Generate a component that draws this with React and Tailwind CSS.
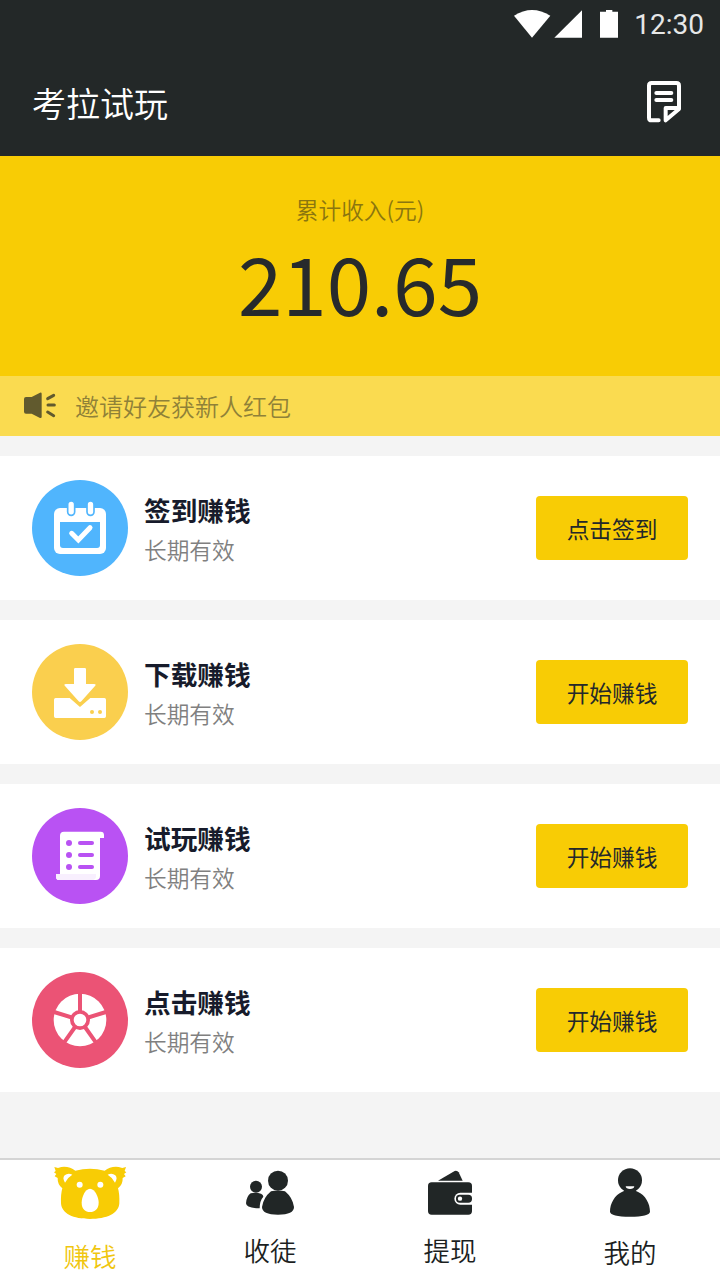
const CalendarIcon = () => (
  <svg className="size-24 shrink-0" viewBox="36 30 288 288">
    <circle cx="180" cy="174" r="144" fill="#50b5fd" />
    <rect x="102" y="114" width="156" height="138" rx="18" fill="#fff" />
    <path d="M120 156H240V225q0 9-9 9H129q-9 0-9-9Z" fill="#50b5fd" />
    <rect x="143" y="93" width="21" height="43" rx="10.5" fill="#fff" stroke="#50b5fd" strokeWidth="5" />
    <rect x="201" y="93" width="21" height="43" rx="10.5" fill="#fff" stroke="#50b5fd" strokeWidth="5" />
    <path d="M155 190L175 210L210 173" fill="none" stroke="#fff" strokeWidth="15" strokeLinecap="round" />
  </svg>
);

const DownloadIcon = () => (
  <svg className="size-24 shrink-0" viewBox="36 30 288 288">
    <circle cx="180" cy="174" r="144" fill="#facf4e" />
    <path d="M107 192H149L180 219L211 192H253q5 0 5 5V247q0 5-5 5H107q-5 0-5-5V197q0-5 5-5Z" fill="#fff" />
    <path
      d="M166 102H194q4 0 4 4V150H222q8 0 3 6L184 202q-4 4-8 0L135 156q-5-6 3-6H162V106q0-4 4-4Z"
      fill="#fff"
      stroke="#facf4e"
      strokeWidth="12"
      paintOrder="stroke"
    />
    <circle cx="216" cy="234" r="6" fill="#facf4e" />
    <circle cx="240" cy="234" r="6" fill="#facf4e" />
  </svg>
);

const ScrollIcon = () => (
  <svg className="size-24 shrink-0" viewBox="36 30 288 288">
    <circle cx="180" cy="174" r="144" fill="#b952f3" />
    <path d="M132 101H242q10 0 10 10V120H240V234q0 12-12 12H118q-10 0-10-10V228H120V113q0-12 12-12Z" fill="#fff" />
    <path d="M108 228H228V234q0 12-12 12H118q-10 0-10-10Z" fill="#f8effe" />
    <g fill="#b952f3">
      <circle cx="147" cy="135" r="9" />
      <circle cx="147" cy="171" r="9" />
      <circle cx="147" cy="207" r="9" />
      <rect x="174" y="129" width="48" height="12" rx="6" />
      <rect x="174" y="165" width="48" height="12" rx="6" />
      <rect x="174" y="201" width="48" height="12" rx="6" />
    </g>
  </svg>
);

const WheelIcon = () => (
  <svg className="size-24 shrink-0" viewBox="36 30 288 288">
    <circle cx="180" cy="174" r="144" fill="#eb5375" />
    <circle cx="180" cy="174" r="79" fill="#fff" />
    <path
      d="M180 174V92M180 174L102 150M180 174L258 150M180 174L132 242M180 174L228 242"
      stroke="#eb5375"
      strokeWidth="12"
    />
    <circle cx="180" cy="174" r="24.500" fill="#fff" stroke="#eb5375" strokeWidth="11" />
  </svg>
);

const KoalaIcon = () => (
  <svg className="h-[57px] w-[76px]" viewBox="66 42 228 171">
    <path
      d="M73 51L84 54L94 51Q118 48 136 62Q180 51 224 62Q242 48 266 51L277 54L288 51L284 63L289 67L282 72L287 79L278 84Q279 103 264 115Q269 132 268 160C266 191 230 207 180 207S95 191 93 160Q92 132 97 115Q82 103 83 84L74 79L79 72L72 67L77 63Z"
      fill="#f8cc05"
    />
    <path d="M105 98Q96 84 104 76Q114 67 127 74Q113 82 105 98ZM255 98Q264 84 256 76Q246 67 233 74Q247 82 255 98Z" fill="#fff" />
    <circle cx="149" cy="104" r="9" fill="#fff" />
    <circle cx="211" cy="104" r="9" fill="#fff" />
    <path d="M180 116C195 116 206 142 206 158C206 177 194 186 180 186S155 177 155 158C155 142 165 116 180 116Z" fill="#fff" />
  </svg>
);

const PeopleIcon = () => (
  <svg className="h-[50px] w-[52px]" viewBox="72 54 156 150" fill="#212626">
    <circle cx="108" cy="110" r="18" />
    <path d="M92 130Q108 126 123 131Q130 134 130 140Q119 152 119 175Q78 174 78 160Q79 140 92 130Z" />
    <circle cx="174" cy="92" r="30" />
    <path d="M153 124Q174 119 195 124Q218 143 222 171Q222 194 174 194T126 171Q130 143 153 124Z" />
  </svg>
);

const WalletIcon = () => (
  <svg className="h-[49px] w-12" viewBox="78 54 144 147">
    <path d="M114 92L164 63q8-2 12 4L188 92Z" fill="#212626" />
    <rect x="84" y="97" width="132" height="97" rx="11" fill="#212626" />
    <path d="M220 128H181a18 18 0 0 0 0 36H220Z" fill="#fff" />
    <rect x="168" y="134" width="48" height="24" rx="11" fill="#212626" />
    <circle cx="180" cy="146" r="6.500" fill="#fff" />
  </svg>
);

const PersonIcon = () => (
  <svg className="h-[53px] w-11" viewBox="114 48 132 159">
    <circle cx="180" cy="91" r="36" fill="#212626" />
    <path d="M157 125Q166 122 162 116H198Q194 122 203 125C226 135 240 160 240 185Q238 200 180 200T120 185C120 160 134 135 157 125Z" fill="#212626" />
    <path d="M167 109H193Q192 117 180 117T167 109Z" fill="#fff" />
  </svg>
);

const tasks = [
  { title: "签到赚钱", action: "点击签到", Icon: CalendarIcon },
  { title: "下载赚钱", action: "开始赚钱", Icon: DownloadIcon },
  { title: "试玩赚钱", action: "开始赚钱", Icon: ScrollIcon },
  { title: "点击赚钱", action: "开始赚钱", Icon: WheelIcon },
];

const tabs = [
  { label: "赚钱", Icon: KoalaIcon, pad: "pt-1", text: "mt-[15px] text-[#f0c60f]" },
  { label: "收徒", Icon: PeopleIcon, pad: "pt-2", text: "mt-3 text-[#1c1f1f]" },
  { label: "提现", Icon: WalletIcon, pad: "pt-2", text: "mt-[13px] text-[#1c1f1f]" },
  { label: "我的", Icon: PersonIcon, pad: "pt-1.5", text: "mt-[13px] text-[#1c1f1f]" },
];

export default function App() {
  return (
    <div className="flex h-[1280px] w-[720px] flex-col overflow-hidden bg-[#f4f4f4] font-['Noto_Sans_CJK_SC',sans-serif] font-[350]">
      <header className="h-[156px] bg-[#232828] text-white">
        <div className="flex h-12 items-start justify-end pt-2 pr-4">
          <svg className="mr-3.5 h-8 w-[110px]" viewBox="30 24 330 96" fill="#fff">
            <path d="M42 47Q96 13 151 47L96 113Z" />
            <path d="M163 113L246 31V113Z" />
            <path d="M300 35H318V30H337V35H354V113H300Z" />
          </svg>
          <span className="pt-px font-[Roboto,sans-serif] text-[28px] leading-8 font-normal text-[#e6e7e7]">12:30</span>
        </div>
        <div className="flex h-[108px] items-center justify-between pr-[38px] pl-8">
          <h1 className="pt-0.5 text-[34px] leading-[50px] font-[350]">考拉试玩</h1>
          <svg
            className="h-11 w-9"
            viewBox="438 240 108 132"
            fill="none"
            stroke="#fff"
            strokeWidth="12"
            strokeLinecap="round"
            strokeLinejoin="round"
          >
            <path d="M476 361H455q-8 0-8-8V257q0-8 8-8H529q8 0 8 8V327L497 361V324H535" />
            <path d="M469 279H514M469 300H514" />
          </svg>
        </div>
      </header>

      <section className="flex h-[220px] flex-col items-center bg-[#f8cc05] pt-[37px]">
        <p className="text-[22.700px] leading-[34px] text-[#8b760f]">累计收入(元)</p>
        <p className="text-[80px] leading-[108px] font-normal text-[#272a2c]">210.65</p>
      </section>

      <div className="flex h-15 items-center bg-[#fadb50] pl-[23px] text-[#8f8138]">
        <svg className="h-7 w-[34px]" viewBox="69 66 102 84">
          <path
            d="M78 81H95L120 68q5-1 5 3V141q0 4-5 3L95 131H78q-6 0-6-6V87q0-6 6-6Z"
            fill="#615a2e"
          />
          <path d="M143 86L161 76M144 105H163M143 126L161 137" stroke="#615a2e" strokeWidth="9" strokeLinecap="round" />
        </svg>
        <span className="ml-[18px] text-[24px] leading-9">邀请好友获新人红包</span>
      </div>

      <main className="flex flex-1 flex-col gap-5 pt-5">
        {tasks.map(({ title, action, Icon }) => (
          <article key={title} className="flex h-36 items-center bg-white px-8">
            <Icon />
            <div className="ml-4 flex-1 pt-1">
              <h2 className="text-[26.700px] leading-10 font-bold text-[#171b2b]">{title}</h2>
              <p className="text-[22.700px] leading-10 text-[#808080]">长期有效</p>
            </div>
            <button className="h-16 w-38 rounded bg-[#f8cc05] pt-0.5 text-[22.700px] leading-[34px] font-normal text-[#24282a]">
              {action}
            </button>
          </article>
        ))}
      </main>

      <nav className="grid h-[122px] grid-cols-4 border-t-2 border-[#d4d4d4] bg-white">
        {tabs.map(({ label, Icon, pad, text }) => (
          <a key={label} className={`flex flex-col items-center ${pad}`}>
            <Icon />
            <span className={`text-[26.500px] leading-10 ${text}`}>{label}</span>
          </a>
        ))}
      </nav>
    </div>
  );
}
